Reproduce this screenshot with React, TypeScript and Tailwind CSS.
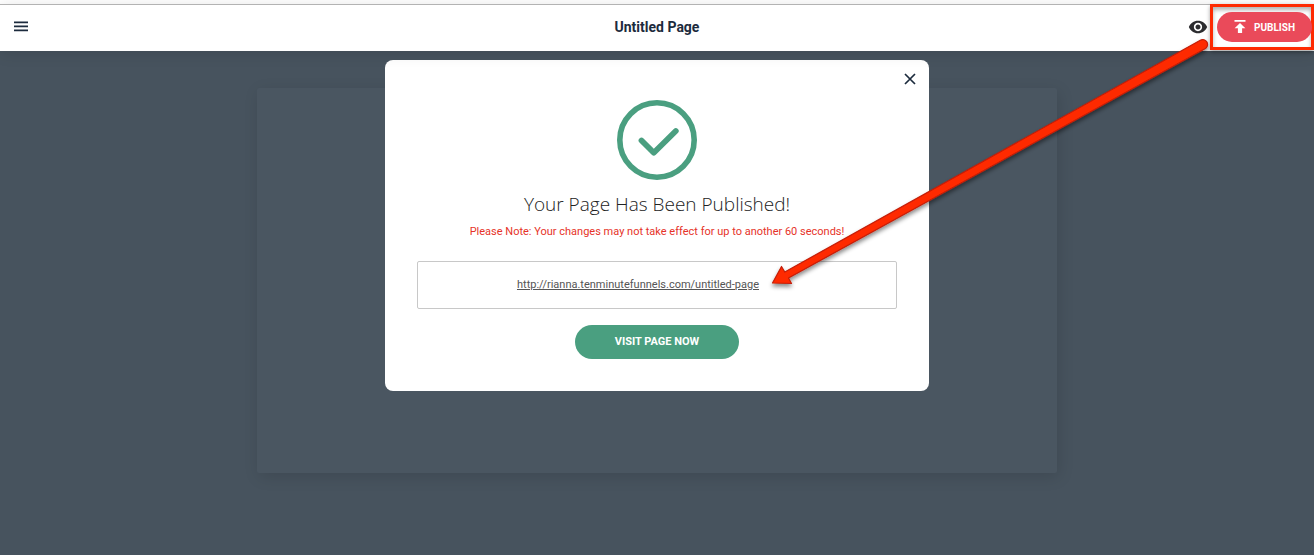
import React from "react";

function MenuIcon() {
  return (
    <svg width="16" height="12" viewBox="0 0 16 12" aria-hidden="true">
      <path d="M1 1.4h14M1 5.4h14M1 9.4h14" stroke="#1c2b3d" strokeWidth="1.6" />
    </svg>
  );
}

function EyeIcon() {
  return (
    <svg width="20" height="20" viewBox="0 0 24 24" fill="#2c2c2f" aria-hidden="true">
      <path d="M12 4.5C7 4.5 2.73 7.61 1 12c1.73 4.39 6 7.5 11 7.5s9.27-3.11 11-7.5c-1.73-4.39-6-7.5-11-7.5zM12 17c-2.76 0-5-2.24-5-5s2.24-5 5-5 5 2.24 5 5-2.24 5-5 5zm0-8c-1.66 0-3 1.34-3 3s1.34 3 3 3 3-1.34 3-3-1.34-3-3-3z" />
    </svg>
  );
}

function UploadIcon() {
  return (
    <svg width="12" height="14" viewBox="0 0 12 14" fill="#fff" aria-hidden="true">
      <path d="M0.5 0h11v1.7H0.5zM6 3l5.4 5.2H8.1V13H3.9V8.2H0.6z" />
    </svg>
  );
}

function CheckCircle() {
  return (
    <svg width="80" height="80" viewBox="0 0 80 80" fill="none" stroke="#4a9f80" aria-hidden="true">
      <circle cx="40" cy="40" r="37.2" strokeWidth="5.6" />
      <path d="M24.5 40.5L36.8 52.7L58.8 31" strokeWidth="5.8" strokeLinecap="round" strokeLinejoin="round" />
    </svg>
  );
}

function PointerArrow() {
  return (
    <svg
      className="pointer-events-none absolute top-0 right-0 z-30"
      width="554"
      height="300"
      viewBox="760 0 554 300"
      aria-hidden="true"
    >
      <defs>
        <filter id="arrow-shadow" x="-10%" y="-10%" width="120%" height="125%">
          <feDropShadow dx="0" dy="3" stdDeviation="2" floodColor="#000" floodOpacity="0.45" />
        </filter>
      </defs>
      <path
        d="M772.5 283L781.5 266.5L784.8 272L1200.3 40.2A4.8 4.8 0 0 1 1205 48.8L788.5 278L791.5 283.5Z"
        fill="#fe2a02"
        stroke="#c41e08"
        strokeWidth="1.2"
        strokeLinejoin="round"
        filter="url(#arrow-shadow)"
      />
    </svg>
  );
}

function Header() {
  return (
    <header className="relative z-20 mt-1 grid h-[47px] grid-cols-[1fr_auto_1fr] items-start border-t border-[#b3b3b3] bg-white shadow-[0_2px_16px_rgba(0,0,0,0.12)]">
      <div className="flex h-11 items-center pl-[13px]">
        <button type="button" aria-label="Menu">
          <MenuIcon />
        </button>
      </div>
      <h1 className="text-sm leading-11 font-bold text-[#1c2b3d]">Untitled Page</h1>
      <div className="-mt-px flex items-center justify-end">
        <button type="button" aria-label="Preview" className="mr-[2px]">
          <EyeIcon />
        </button>
        <div className="flex h-[46px] w-[104px] items-center justify-end border-3 border-[#fe2a02] shadow-[0_2px_4px_rgba(0,0,0,0.35),inset_0_3px_4px_rgba(0,0,0,0.3)]">
          <button
            type="button"
            className="-mr-px flex h-[30px] w-[95px] items-center justify-center gap-2 rounded-full bg-[#ea4a5a] text-[10px] font-bold text-white"
          >
            <UploadIcon />
            PUBLISH
          </button>
        </div>
      </div>
    </header>
  );
}

function PublishedDialog() {
  return (
    <section
      role="dialog"
      aria-labelledby="published-title"
      className="absolute top-[9px] left-1/2 z-10 flex w-[544px] max-w-full -translate-x-1/2 flex-col items-center rounded-lg bg-white px-8 pt-10 pb-8"
    >
      <button type="button" aria-label="Close" className="absolute top-[13px] right-[13px]">
        <svg width="12" height="12" viewBox="0 0 12 12" aria-hidden="true">
          <path d="M1 1l10 10M11 1L1 11" stroke="#1c2b3d" strokeWidth="1.7" />
        </svg>
      </button>
      <CheckCircle />
      <h2
        id="published-title"
        className="mt-2 font-['Open_Sans',sans-serif] text-[19px] leading-8 font-light text-[#222222]"
      >
        Your Page Has Been Published!
      </h2>
      <p className="mt-1 text-[11px] leading-4 text-[#e63329]">
        Please Note: Your changes may not take effect for up to another 60 seconds!
      </p>
      <div className="mt-[21px] flex h-12 w-full items-center justify-center rounded-xs border border-[#c8c8c8] pr-[38px]">
        <a
          href="http://rianna.tenminutefunnels.com/untitled-page"
          className="text-[11px] leading-4 text-[#555555] underline"
        >
          http://rianna.tenminutefunnels.com/untitled-page
        </a>
      </div>
      <button
        type="button"
        className="mt-4 h-[34px] rounded-full bg-[#4a9f80] px-10 text-[11px] font-bold text-white"
      >
        VISIT PAGE NOW
      </button>
    </section>
  );
}

export default function App() {
  return (
    <div className="relative flex min-h-screen flex-col overflow-hidden bg-white font-['Roboto',sans-serif]">
      <Header />
      <main className="relative flex-1 bg-[#47535e] px-4 pt-[37px] pb-20">
        <div className="mx-auto h-[385px] max-w-[800px] rounded-xs bg-[#4a5661] shadow-[2px_4px_16px_rgba(0,0,0,0.12)]" />
        <PublishedDialog />
      </main>
      <PointerArrow />
    </div>
  );
}
